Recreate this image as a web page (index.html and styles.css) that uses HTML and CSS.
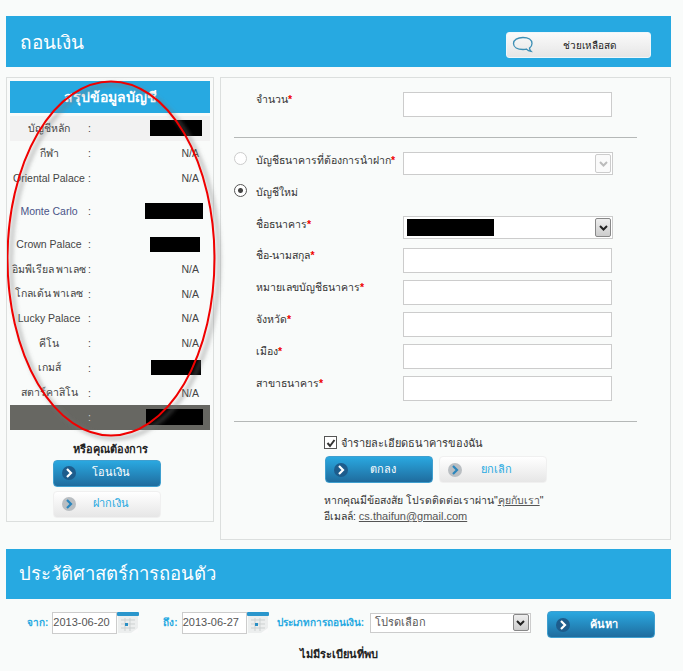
FILE: index.html
```html
<!doctype html>
<html lang="th">
	<head>
		<title>ถอนเงิน</title>
		<meta charset="UTF-8">
		<link rel="stylesheet" href="styles.css">
	</head>

	<body>
		<div class="wrapper">

			<div class="page-head">
				<h1>ถอนเงิน</h1>
				<a class="help-btn">
					<svg class="help-icon" width="22" height="20" viewBox="0 0 22 20"><path d="M11 2.500c-5.500 0-9.500 2.300-9.500 6s4 6 9.500 6c1.300 0 2.500-.1 3.500-.4 1 1.200 2.500 2 4.500 2.200-.9-.8-1.400-1.800-1.500-3.200 1.600-1.100 2.500-2.700 2.500-4.600 0-3.700-3.500-6-9-6z" fill="none" stroke="#3d8fb5" stroke-width="1.300"/></svg>
					<span>ช่วยเหลือสด</span>
				</a>
			</div>

			<div class="columns">
				<div class="summary">
					<div class="summary-title">สรุปข้อมูลบัญชี</div>

					<div class="row row-main"><span class="row-name">บัญชีหลัก</span><span>:</span><span class="row-val"><i class="mask mask-main"></i></span></div>
					<div class="row"><span class="row-name">กีฬา</span><span>:</span><span class="row-val">N/A</span></div>
					<div class="row"><span class="row-name">Oriental Palace</span><span>:</span><span class="row-val">N/A</span></div>
					<div class="row row-tall"><span class="row-name monte">Monte Carlo</span><span>:</span><span class="row-val"><i class="mask mask-monte"></i></span></div>
					<div class="row"><span class="row-name">Crown Palace</span><span>:</span><span class="row-val"><i class="mask mask-crown"></i></span></div>
					<div class="row"><span class="row-name">อิมพีเรียล พาเลซ</span><span>:</span><span class="row-val">N/A</span></div>
					<div class="row"><span class="row-name">โกลเด้น พาเลซ</span><span>:</span><span class="row-val">N/A</span></div>
					<div class="row"><span class="row-name">Lucky Palace</span><span>:</span><span class="row-val">N/A</span></div>
					<div class="row"><span class="row-name">คีโน</span><span>:</span><span class="row-val">N/A</span></div>
					<div class="row"><span class="row-name">เกมส์</span><span>:</span><span class="row-val"><i class="mask mask-game"></i></span></div>
					<div class="row"><span class="row-name">สตาร์คาสิโน</span><span>:</span><span class="row-val">N/A</span></div>
					<div class="row row-total"><span class="row-name"></span><span>:</span><span class="row-val"><i class="mask mask-total"></i></span></div>

					<div class="or-title">หรือคุณต้องการ</div>
					<div class="side-btns">
						<a class="btn btn-blue"><svg class="chev" width="20" height="20" viewBox="0 0 20 20"><circle cx="10" cy="10" r="7" fill="#1d5c8c"/><path d="M8 6l4 4-4 4" fill="none" stroke="#fff" stroke-width="2.200"/></svg><span>โอนเงิน</span></a>
						<a class="btn btn-light"><svg class="chev" width="20" height="20" viewBox="0 0 20 20"><circle cx="10" cy="10" r="7" fill="#b9bec2"/><path d="M8 6l4 4-4 4" fill="none" stroke="#2a86bd" stroke-width="2.200"/></svg><span>ฝากเงิน</span></a>
					</div>

					<svg class="circle-mark" width="222" height="370" viewBox="0 0 222 370">
						<defs><filter id="blur" x="-10%" y="-10%" width="120%" height="120%"><feGaussianBlur stdDeviation="2"/></filter></defs>
						<ellipse cx="104" cy="180.500" rx="104" ry="177" fill="none" stroke="#777" stroke-opacity="0.55" stroke-width="3" filter="url(#blur)" transform="translate(4 3)"/>
						<ellipse cx="104" cy="180.500" rx="103.500" ry="177" fill="none" stroke="#f00000" stroke-width="2"/>
					</svg>
				</div>

				<div class="form-panel">
					<div class="field"><label>จำนวน<b>*</b></label><div class="textbox"></div></div>
					<hr class="rule rule-top">

					<div class="field field-radio1">
						<label class="radio-label"><i class="radio radio-off"></i><span>บัญชีธนาคารที่ต้องการนำฝาก<b>*</b></span></label>
						<div class="selectbox selectbox-off"><span class="arrow arrow-off"><svg width="9" height="6" viewBox="0 0 9 6"><path d="M1 1l3.500 3.500L8 1" fill="none" stroke="#bbb" stroke-width="2"/></svg></span></div>
					</div>
					<div class="field-radio2"><label class="radio-label"><i class="radio radio-on"></i><span>บัญชีใหม่</span></label></div>

					<div class="field field-bank">
						<label>ชื่อธนาคาร<b>*</b></label>
						<div class="selectbox"><i class="mask mask-bank"></i><span class="arrow"><svg width="9" height="6" viewBox="0 0 9 6"><path d="M1 1l3.500 3.500L8 1" fill="none" stroke="#222" stroke-width="2"/></svg></span></div>
					</div>
					<div class="field"><label>ชื่อ-นามสกุล<b>*</b></label><div class="textbox"></div></div>
					<div class="field"><label>หมายเลขบัญชีธนาคาร<b>*</b></label><div class="textbox"></div></div>
					<div class="field"><label>จังหวัด<b>*</b></label><div class="textbox"></div></div>
					<div class="field"><label>เมือง<b>*</b></label><div class="textbox"></div></div>
					<div class="field"><label>สาขาธนาคาร<b>*</b></label><div class="textbox"></div></div>
					<hr class="rule rule-bottom">

					<div class="form-foot">
						<div class="remember"><span class="check"><svg width="10" height="10" viewBox="0 0 10 10"><path d="M1.500 5l2.500 3 4.500-6" fill="none" stroke="#333" stroke-width="2"/></svg></span>จำรายละเอียดธนาคารของฉัน</div>
						<div class="foot-btns">
							<a class="btn btn-blue"><svg class="chev" width="20" height="20" viewBox="0 0 20 20"><circle cx="10" cy="10" r="7" fill="#1d5c8c"/><path d="M8 6l4 4-4 4" fill="none" stroke="#fff" stroke-width="2.200"/></svg><span>ตกลง</span></a>
							<a class="btn btn-light"><svg class="chev" width="20" height="20" viewBox="0 0 20 20"><circle cx="10" cy="10" r="7" fill="#b9bec2"/><path d="M8 6l4 4-4 4" fill="none" stroke="#2a86bd" stroke-width="2.200"/></svg><span>ยกเลิก</span></a>
						</div>
						<p class="contact">หากคุณมีข้อสงสัย โปรดติดต่อเราผ่าน"<a>คุยกับเรา</a>"<br>อีเมลล์: <a class="mail">cs.thaifun@gmail.com</a></p>
					</div>
				</div>
			</div>

			<div class="page-head page-head-2"><h1>ประวัติศาสตร์การถอนตัว</h1></div>

			<div class="filters">
				<label class="filter-label">จาก:</label>
				<div class="datebox">2013-06-20</div>
				<svg class="cal" width="22" height="22" viewBox="0 0 22 22"><rect width="22" height="4" rx="1" fill="#2a96cc"/><rect x="1" y="4" width="20" height="17" fill="#eceeee"/><path d="M4 8h14M4 12h14M4 16h14M8 6v13M13 6v13" stroke="#cdd1d1"/><rect x="8" y="11" width="3" height="3" fill="#2a8fc4"/><path d="M14 21l7-5v5z" fill="#fbfbfb"/></svg>
				<label class="filter-label label-to">ถึง:</label>
				<div class="datebox">2013-06-27</div>
				<svg class="cal" width="22" height="22" viewBox="0 0 22 22"><rect width="22" height="4" rx="1" fill="#2a96cc"/><rect x="1" y="4" width="20" height="17" fill="#eceeee"/><path d="M4 8h14M4 12h14M4 16h14M8 6v13M13 6v13" stroke="#cdd1d1"/><rect x="8" y="11" width="3" height="3" fill="#2a8fc4"/><path d="M14 21l7-5v5z" fill="#fbfbfb"/></svg>
				<label class="filter-label label-type">ประเภทการถอนเงิน:</label>
				<div class="selectbox selectbox-type"><span class="select-text">โปรดเลือก</span><span class="arrow"><svg width="9" height="6" viewBox="0 0 9 6"><path d="M1 1l3.500 3.500L8 1" fill="none" stroke="#222" stroke-width="2"/></svg></span></div>
				<a class="btn btn-blue btn-search"><svg class="chev" width="20" height="20" viewBox="0 0 20 20"><circle cx="10" cy="10" r="7" fill="#1d5c8c"/><path d="M8 6l4 4-4 4" fill="none" stroke="#fff" stroke-width="2.200"/></svg><span>ค้นหา</span></a>
			</div>

			<p class="no-records">ไม่มีระเบียนที่พบ</p>
		</div>
	</body>
</html>
```

FILE: styles.css
```css
* {
	padding: 0;
	margin: 0;
	box-sizing: border-box;
	font-family: "Liberation Sans", "Noto Sans", "DejaVu Sans", sans-serif;
}

body {
	background: #f9fbfa;
	color: #333;
	font-size: 10.5px;
}

.wrapper {
	width: 683px;
	height: 671px;
	padding: 16px 12px 0 6px;
	overflow: hidden;
}

b {
	color: #e00;
}

i {
	display: block;
}

/* blue title bars */
.page-head {
	display: flex;
	justify-content: space-between;
	align-items: center;
	height: 51px;
	padding: 0 20px 0 14px;
	background: #27a9e1;
}

.page-head h1 {
	color: #fff;
	font-size: 19px;
	font-weight: normal;
}

.page-head-2 {
	height: 50px;
	margin-top: 9px;
	padding: 0 20px 2px 13px;
}

.page-head-2 h1 {
	font-size: 18.5px;
}

.help-btn {
	display: flex;
	align-items: center;
	width: 145px;
	height: 26px;
	margin-top: 7px;
	padding-left: 5px;
	border: 1px solid #eef7fb;
	border-radius: 3px;
	background: linear-gradient(#fafafa, #e6e6e6);
	color: #222;
	font-size: 10px;
}

.help-btn span {
	margin-left: 29px;
}

.columns {
	display: flex;
	align-items: flex-start;
	gap: 6px;
	margin-top: 10px;
}

/* left side */
.summary {
	position: relative;
	width: 208px;
	height: 445px;
	padding: 3px;
	border: 1px solid #dcdfde;
}

.summary-title {
	height: 32px;
	margin-bottom: 3px;
	background: #27a9e1;
	color: #fff;
	font-size: 14px;
	font-weight: bold;
	line-height: 32px;
	text-align: center;
}

.row {
	display: grid;
	grid-template-columns: 78px 4px 1fr;
	align-items: center;
	height: 24.700px;
	color: #444;
}

.row-main {
	background: #f2f2f2;
}

.row-tall {
	height: 42px;
}

.row-total {
	background: #676762;
	color: #ccc;
}

.row-name {
	text-align: center;
	white-space: nowrap;
}

.monte {
	color: #4a5488;
}

.row-val {
	display: flex;
	justify-content: flex-end;
	padding-right: 11px;
}

.mask {
	background: #000;
}

.mask-main {
	width: 52px;
	height: 16px;
	margin-right: -3px;
}

.mask-monte {
	width: 58px;
	height: 16px;
	margin-right: -4px;
}

.mask-crown {
	width: 50px;
	height: 15px;
	margin-right: -1px;
}

.mask-game {
	width: 50px;
	height: 15px;
	margin-right: -2px;
}

.mask-total {
	width: 57px;
	height: 16px;
	margin-right: -4px;
}

.or-title {
	margin-top: 10px;
	color: #222;
	font-size: 11px;
	font-weight: bold;
	text-align: center;
}

.side-btns {
	display: flex;
	flex-direction: column;
	gap: 4px;
	margin: 2px 0 0 43px;
}

.circle-mark {
	position: absolute;
	left: 0;
	top: 0;
	pointer-events: none;
}

/* buttons */
.btn {
	display: flex;
	align-items: center;
	width: 108px;
	height: 27px;
	padding-left: 5px;
	border-radius: 4px;
	font-size: 11px;
}

.btn span {
	flex: 1;
	padding-right: 18px;
	padding-bottom: 2px;
	text-align: center;
}

.btn-blue {
	border: 1px solid #3f9fcf;
	background: linear-gradient(#2aa8e0, #1f6c9e);
	color: #fff;
}

.btn-light {
	background: linear-gradient(#fff, #e6e6e6);
	border: 1px solid #f0f0f0;
	color: #27a9e1;
}

/* right side */
.form-panel {
	width: 451px;
	height: 463px;
	padding: 14px 33px 0 13px;
	border: 1px solid #dcdfde;
}

.field {
	display: flex;
	align-items: center;
	height: 25px;
	margin-bottom: 7px;
}

.field label {
	flex: none;
	width: 169px;
	padding: 0 0 10px 22px;
}

.field .radio-label {
	padding: 0;
}

.radio-label {
	display: flex;
	align-items: flex-start;
	gap: 9px;
	line-height: 16px;
	white-space: nowrap;
}

.radio {
	flex: none;
	width: 13px;
	height: 13px;
	border: 1px solid #ccc;
	border-radius: 50%;
	background: #fff;
}

.radio-on {
	border-color: #555;
	background: radial-gradient(circle, #444 2px, #fff 3px);
}

.textbox {
	width: 209px;
	height: 25px;
	border: 1px solid #ccc;
	background: #fff;
}

.selectbox {
	position: relative;
	display: flex;
	align-items: center;
	width: 210px;
	height: 23px;
	border: 1px solid #ccc;
	background: #fff;
}

.arrow {
	position: absolute;
	right: 1px;
	top: 1px;
	display: flex;
	align-items: center;
	justify-content: center;
	width: 16px;
	height: 19px;
	border: 1px solid #888;
	border-radius: 2px;
	background: linear-gradient(#eee, #ccc);
}

.arrow-off {
	border-color: #ccc;
	background: #fafafa;
}

.rule {
	height: 1px;
	border: 0;
	background: #b5b8b7;
}

.rule-top {
	margin: 20px 0 14px;
}

.field-radio1 {
	align-items: flex-start;
	height: 23px;
	margin-bottom: 5px;
}

.field-radio2 {
	height: 23px;
	margin-bottom: 13px;
	padding-top: 4px;
}

.field-bank {
	height: 23px;
	margin-bottom: 9px;
}

.field-bank label {
	padding-bottom: 6px;
}

.mask-bank {
	width: 87px;
	height: 17px;
	margin-left: 3px;
}

.rule-bottom {
	margin: 20px 0 0;
}

.form-foot {
	padding: 14px 0 0 90px;
}

.remember {
	display: flex;
	align-items: center;
	gap: 4px;
	height: 13px;
	font-size: 11px;
}

.check {
	display: flex;
	align-items: center;
	justify-content: center;
	width: 13px;
	height: 13px;
	border: 1px solid #555;
	background: #fff;
}

.foot-btns {
	display: flex;
	gap: 6px;
	margin: 7px 0 9px 1px;
}

.contact {
	line-height: 16px;
}

.contact a {
	color: #555;
	text-decoration: underline;
}

.contact .mail {
	font-size: 11px;
}

/* history filters */
.filters {
	display: flex;
	align-items: flex-start;
	height: 27px;
	margin-top: 12px;
	padding-left: 21px;
	color: #27a9e1;
	font-size: 10px;
	font-weight: bold;
}

.filter-label {
	margin-top: 4px;
}

.datebox {
	width: 65px;
	height: 22px;
	margin: 1px 0 0 4px;
	border: 1px solid #ccc;
	background: #fff;
	color: #555;
	font-size: 11px;
	font-weight: normal;
	line-height: 19px;
}

.cal {
	margin-top: 1px;
}

.label-to {
	margin-left: 24px;
}

.label-type {
	width: 89px;
	margin-left: 8px;
	white-space: nowrap;
}

.selectbox-type {
	width: 161px;
	height: 20px;
	margin: 2px 0 0 4px;
	color: #555;
	font-size: 11px;
	font-weight: normal;
}

.selectbox-type .arrow {
	height: 17px;
	top: 0;
}

.select-text {
	padding: 0 0 2px 4px;
}

.btn-search {
	margin-left: 16px;
}

.no-records {
	margin-top: 7px;
	color: #222;
	font-size: 11px;
	font-weight: bold;
	text-align: center;
}
```
